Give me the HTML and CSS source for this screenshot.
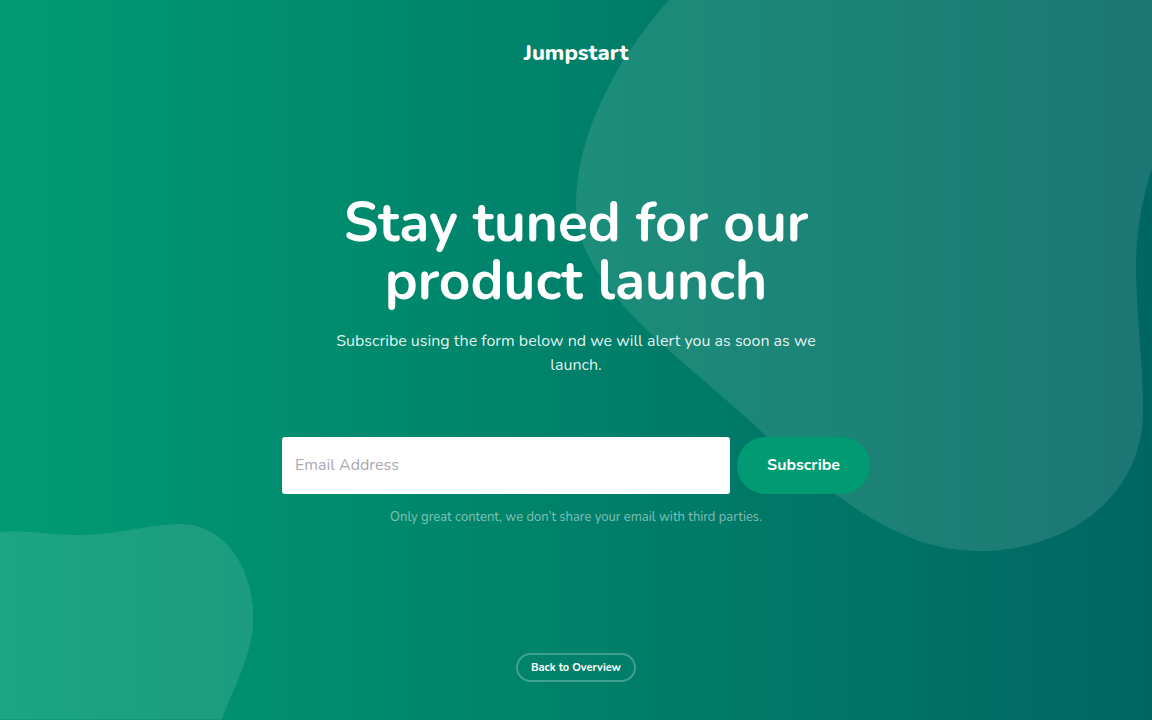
FILE: index.html
```
<!DOCTYPE html>
<html lang="en">
<head>
<meta charset="utf-8">
<meta name="viewport" content="width=device-width, initial-scale=1">
<title>Jumpstart</title>
<link rel="stylesheet" href="styles.css">
</head>
<body>
<div class="page">
  <svg class="blob blob-top" viewBox="0 0 576 552" aria-hidden="true"><path d="M93 0C34 66 0 142 0 203C0 246 22 280 61 320C80 340 104 360 127 380C148 398 170 417 190 436C212 457 235 477 259 494C281 510 301 523 324 533C350 545 375 551 404 551C484 551 567 503 567 410C567 362 560 315 560 265C560 230 567 195 576 169V0Z"/></svg>
  <svg class="blob blob-bottom" viewBox="0 0 254 196" aria-hidden="true"><path d="M0 8C30 6 50 11 80 11C118 11 150 0 180 0C230 0 254 51 254 93C254 128 237 158 222 196H0Z"/></svg>
  <header class="header"><a class="brand" href="#">Jumpstart</a></header>
  <main class="main">
    <h1 class="title">Stay tuned for our product launch</h1>
    <p class="lead">Subscribe using the form below nd we will alert you as soon as we launch.</p>
    <form class="form">
      <input class="email" type="email" aria-label="Email Address" placeholder="Email Address">
      <button class="subscribe" type="submit">Subscribe</button>
    </form>
    <p class="note">Only great content, we don’t share your email with third parties.</p>
  </main>
  <footer class="footer"><a class="back" href="#">Back to Overview</a></footer>
</div>
</body>
</html>
```
FILE: styles.css
```
* { box-sizing: border-box; }
body {
  margin: 0;
  color: #fff;
  font-family: Nunito, Lato, "Open Sans", sans-serif;
}
a { color: inherit; text-decoration: none; }
.page {
  position: relative;
  display: flex;
  flex-direction: column;
  min-height: 100vh;
  overflow: hidden;
  background: linear-gradient(90deg, #009b72, #006663);
}
.blob { position: absolute; fill: #fff; fill-opacity: .11; }
.blob-top { top: 0; right: 0; width: 50%; }
.blob-bottom { bottom: 0; left: 0; width: 22%; }
.header, .main, .footer {
  position: relative;
  display: flex;
  flex-direction: column;
  align-items: center;
  text-align: center;
}
.header { padding-top: 37px; }
.brand { font-size: 22px; line-height: 32px; font-weight: 800; }
.main { flex: 1; justify-content: center; padding: 0 16px 2px; }
.title {
  max-width: 500px;
  margin: 0 0 19px;
  font-size: 55px;
  line-height: 58px;
  font-weight: 700;
}
.lead {
  max-width: 500px;
  margin: 0 0 60px;
  font-size: 16px;
  line-height: 24px;
  color: rgba(255, 255, 255, .9);
}
.form { display: flex; gap: 7px; width: 100%; max-width: 588px; }
.email, .subscribe { height: 57px; border: 0; font: inherit; font-size: 16px; }
.email {
  flex: 1;
  min-width: 0;
  padding: 0 13px;
  border-radius: 3px;
  background: #fff;
  color: #333;
}
.email::placeholder { color: #a9a9b0; opacity: 1; }
.subscribe {
  padding: 0 30px;
  border-radius: 29px;
  background: #009b72;
  color: #fff;
  font-weight: 700;
}
.note {
  margin: 13px 0 0;
  font-size: 13px;
  line-height: 20px;
  color: rgba(255, 255, 255, .5);
}
.footer { padding-bottom: 38px; }
.back {
  padding: 5px 13px;
  border: 2px solid rgba(255, 255, 255, .25);
  border-radius: 15px;
  font-size: 11px;
  line-height: 15px;
  font-weight: 700;
}
```
